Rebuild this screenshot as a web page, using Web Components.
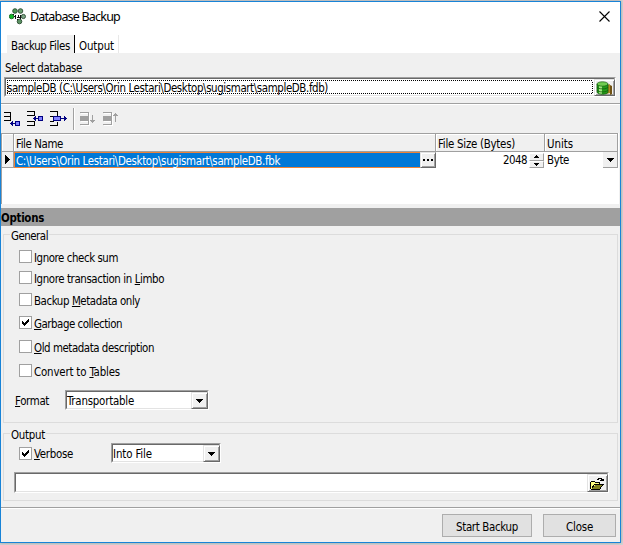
<!DOCTYPE html>
<html lang="en"><head><meta charset="utf-8"><title>Database Backup</title>
<style>
html,body{margin:0;height:545px;overflow:hidden;background:#d5d5d5}
body{font:11.4px/14px "DejaVu Sans Condensed","DejaVu Sans",sans-serif;font-stretch:condensed;color:#000}
</style></head><body>
<backup-window></backup-window>
<script>
const define=(name,html,setup)=>customElements.define(name,class extends HTMLElement{
  constructor(){super();this.attachShadow({mode:'open'}).innerHTML=html;}
  connectedCallback(){if(setup)setup(this,this.shadowRoot);}
});

// Text run fitted to a given advance width through letter spacing.
define('fit-text',`<style>:host{display:block;white-space:pre;flex:none;padding-top:1px;margin-bottom:-1px}span{display:inline-block}::slotted(u){text-underline-offset:1px;text-decoration-thickness:1px}</style><span><slot></slot></span>`,(el,r)=>{
  const s=r.querySelector('span'),w=+el.getAttribute('w');
  el.style.width=w+'px';
  s.style.letterSpacing='0px';
  const n=el.textContent.length;
  s.style.letterSpacing=((w-s.getBoundingClientRect().width)/n)+'px';
});

define('rule-line',`<style>:host{display:block;height:1px;background:#a0a0a0;border-bottom:1px solid #fff}</style>`);

define('raised-button',`<style>:host{display:flex;box-sizing:border-box;align-items:center;justify-content:center;background:#f0f0f0;border:1px solid;border-color:#e3e3e3 #696969 #696969 #e3e3e3;box-shadow:inset 1px 1px #fff,inset -1px -1px #a0a0a0;flex:none}</style><slot></slot>`);

define('drop-arrow',`<style>:host{display:block;width:7px;height:4px}svg{display:block}</style><svg width="7" height="4" shape-rendering="crispEdges"><path d="M0 0h7v1H0zM1 1h5v1H1zM2 2h3v1H2zM3 3h1v1H3z"/></svg>`);

define('sunken-field',`<style>:host{display:flex;box-sizing:border-box;border:1px solid;border-color:#a0a0a0 #fff #fff #a0a0a0;flex:none}
.in{flex:1;display:flex;min-width:0;box-sizing:border-box;border:1px solid;border-color:#696969 #e3e3e3 #e3e3e3 #696969;background:#fff}
.txt{flex:1;min-width:0;display:flex;align-items:center}
:host([focused]) .txt{margin:1px;background:repeating-linear-gradient(90deg,#000 0 1px,#fff 1px 2px) 0 0/100% 1px no-repeat,repeating-linear-gradient(90deg,#000 0 1px,#fff 1px 2px) 0 100%/100% 1px no-repeat,repeating-linear-gradient(#000 0 1px,#fff 1px 2px) 0 0/1px 100% no-repeat,repeating-linear-gradient(#000 0 1px,#fff 1px 2px) 100% 0/1px 100% no-repeat}
::slotted([slot=button]){margin:0 -1px -1px 0}</style><div class="in"><div class="txt"><slot></slot></div><slot name="button"></slot></div>`);

define('check-item',`<style>:host{display:flex;height:13px;align-items:center;gap:2px}
i{width:13px;height:13px;box-sizing:border-box;border:1px solid #a0a0a0;background:#fff;flex:none}
svg{display:none}:host([checked]) svg{display:block}</style><i><svg width="11" height="11" shape-rendering="crispEdges"><path d="M2 4h1v3H2zM3 5h1v3H3zM4 6h1v3H4zM5 5h1v3H5zM6 4h1v3H6zM7 3h1v3H7zM8 2h1v3H8z"/></svg></i><slot></slot>`);

define('group-box',`<style>:host{display:block;box-sizing:border-box;border:1px solid #dcdcdc;margin:0 2px;position:relative}
.cap{position:absolute;left:6px;top:-7px;background:#f0f0f0;padding:0 1px}</style><div class="cap"><slot name="caption"></slot></div><slot></slot>`);

define('push-button',`<style>:host{display:flex;box-sizing:border-box;height:23px;align-items:center;justify-content:center;border:1px solid #adadad;background:#e1e1e1}</style><slot></slot>`);

define('title-bar',`<style>:host{display:flex;height:31px;background:#fff;padding:0 10px 0 8px;box-sizing:border-box;align-items:flex-start}
svg{display:block;flex:none}.logo{margin-top:6px}fit-text{font:12.5px/18px "Noto Sans","Open Sans",sans-serif;margin:5px 0 0 4px}.x{margin:9px 0 0 auto}</style>
<svg class="logo" width="17" height="17"><g stroke="#27492e" stroke-width=".9"><circle cx="6" cy="3" r="2.300" fill="#4f9a58"/><circle cx="11.500" cy="3" r="2.300" fill="#6a9f70"/><circle cx="2.600" cy="8.500" r="2.300" fill="#11b925" stroke="#176a22"/><circle cx="14.400" cy="8.500" r="2.100" fill="#7fa588"/><circle cx="10.500" cy="13.500" r="2.300" fill="#5d9364"/></g><path d="M5 8.500h2M6.500 7v4M8 9.500h3M9.500 7v2M11.500 7v4M4 6.500h1M8 11.500h1" stroke="#111"/></svg>
<fit-text w="90">Database Backup</fit-text>
<svg class="x" width="11" height="11"><path d="M.5.5l10 10M10.5.5l-10 10" stroke="#000" stroke-width="1.1"/></svg>`);

define('tab-strip',`<style>:host{display:flex;height:21px;box-sizing:border-box;padding:3px 0 0 6px;background:#fff}
div{box-sizing:border-box;height:18px;padding:3px 0 0 4px}.on{width:68px;background:#f0f0f0;border-right:1px solid #000}.off{width:44px;border-right:1px solid #e8e8e8}</style>
<div class="on"><fit-text w="59">Backup Files</fit-text></div><div class="off"><fit-text w="35">Output</fit-text></div>`);

define('tool-bar',`<style>:host{display:block;height:28px;padding-left:3px;box-sizing:border-box}svg{display:block}</style>
<svg width="125" height="28" shape-rendering="crispEdges">
<g fill="none" stroke="#000"><path d="M0 7.5h7M0 11.5h6M0 15.5h7M6.5 7v9"/><path d="M23 6.5h7v4h-7M23 16.500h7v4h-7"/><path d="M46 6.500h7v4M46 11.500h4M46 20.500h7v-4M46 16.500h4"/></g>
<g fill="#8080ff" stroke="#000080"><path d="M11.5 16.5h4v4h-4z"/><path d="M34.5 11.5h4v4h-4z"/><path d="M49.500 11.500h7v4h-7z"/></g>
<g fill="#000080"><path d="M6 18h5v1H6zM8 16h1v5H8zM7 17h1v3H7z"/><path d="M29 13h5v1h-5zM31 11h1v5h-1zM30 12h1v3h-1z"/><path d="M57 13h6v1h-6zM60 11h1v5h-1zM61 12h1v3h-1z"/></g>
<path d="M69.5 3v22" stroke="#a0a0a0"/><path d="M70.500 3v22" stroke="#fff"/>
<g stroke="#fff" fill="none" transform="translate(1 1)"><path d="M76 7.500h8v12h-8M76 11.500h8M76 15.500h8"/><path d="M99 7.500h8v12h-8M99 11.500h8M99 15.500h8"/></g>
<g stroke="#a0a0a0" fill="none"><path d="M76 7.500h8v12h-8M76 11.500h8M76 15.500h8M88.500 10v8"/><path d="M99 7.500h8v12h-8M99 11.500h8M99 15.500h8M111.500 8v9"/></g>
<g fill="#a0a0a0"><path d="M76 11h8v5h-8zM86 15h5v1h-5zM87 16h3v1h-3z"/><path d="M99 11h8v5h-8zM109 10h5v1h-5zM110 9h3v1h-3z"/></g></svg>`);

define('file-grid',`<style>:host{display:block;height:71px;box-sizing:border-box;background:#fff;border-left:1px solid #a0a0a0;margin-right:1px}
.h,.r{display:grid;grid-template-columns:12px 422px 109px 1fr;width:616px}
.h{background:#f0f0f0;border-top:1px solid #a0a0a0;border-bottom:1px solid #a0a0a0;box-sizing:content-box;height:17px}
.h div{border-right:1px solid #a0a0a0;box-shadow:inset 1px 1px #fff;padding:2px 0 0 2px;box-sizing:border-box}
.r{height:16px}.ind{background:#f0f0f0;border-right:1px solid #a0a0a0;border-bottom:1px solid #a0a0a0;display:flex;align-items:center;justify-content:center}
.n{display:flex}.s{flex:1;background:#0078d7;color:#fff;border:1px solid #f08336;border-right:0;box-sizing:border-box;height:16px;padding-left:1px;line-height:14px}
raised-button.d{width:16px;height:16px}.z{display:flex;justify-content:flex-end;gap:2px;padding-top:1px;box-sizing:border-box}.z fit-text{margin-top:-1px}
.spin{width:15px;height:15px;display:flex;flex-direction:column;margin-right:1px}.spin div{flex:1;background:#f0f0f0;border:1px solid;border-color:#fff #a0a0a0 #a0a0a0 #fff;display:flex;align-items:center;justify-content:center}
.u{display:flex;justify-content:space-between;padding-left:2px}.dd{width:15px;height:16px;box-sizing:border-box;background:#f0f0f0;border-right:1px solid #a0a0a0;border-bottom:1px solid #a0a0a0;display:flex;align-items:center;justify-content:center}svg{display:block}</style>
<div class="h"><div></div><div><fit-text w="47">File Name</fit-text></div><div><fit-text w="77">File Size (Bytes)</fit-text></div><div><fit-text w="26">Units</fit-text></div></div>
<div class="r"><div class="ind"><svg width="5" height="9" shape-rendering="crispEdges"><path d="M0 0h1v9H0zM1 1h1v7H1zM2 2h1v5H2zM3 3h1v3H3zM4 4h1v1H4z"/></svg></div>
<div class="n"><div class="s"><fit-text w="264">C:\\Users\\Orin Lestari\\Desktop\\sugismart\\sampleDB.fbk</fit-text></div><raised-button class="d"><svg width="10" height="2"><path d="M0 0h2v2H0zM4 0h2v2H4zM8 0h2v2H8z"/></svg></raised-button></div>
<div class="z"><fit-text w="24">2048</fit-text><div class="spin"><div><svg width="5" height="3" shape-rendering="crispEdges"><path d="M2 0h1v1H2zM1 1h3v1H1zM0 2h5v1H0z"/></svg></div><div><svg width="5" height="3" shape-rendering="crispEdges"><path d="M0 0h5v1H0zM1 1h3v1H1zM2 2h1v1H2z"/></svg></div></div></div>
<div class="u"><fit-text w="22">Byte</fit-text><div class="dd"><drop-arrow></drop-arrow></div></div></div>`);

define('backup-window',`<style>:host{display:flex;flex-direction:column;width:621px;height:542px;box-sizing:border-box;margin-top:1px;border:1px solid #1883d7;background:#f0f0f0;box-shadow:0 0 3px #999;overflow:hidden}
title-bar{height:30px}:host>*{flex:none}
.sel{margin:7px 0 2px 4px}.db{margin:0 4px 0 3px;height:20px}
.bar{height:18px;background:#a0a0a0;margin:4px 0 8px;font-weight:bold;line-height:18px}
.gen{height:189px}.checks{padding:15px 0 0 15px;display:grid;row-gap:0}
.row{display:flex;align-items:center}.fmt{margin:13px 0 0 11px;height:20px;gap:16px}
.out{height:68px;margin-top:10px}.v{height:20px;margin:9px 0 9px 15px}.v sunken-field{margin-left:38px}
sunken-field{height:20px}.file{margin:0 8px 0 10px;height:21px}
.foot{display:flex;justify-content:flex-end;gap:11px;padding:5px 4px 0 0}</style>
<title-bar></title-bar><tab-strip></tab-strip>
<fit-text class="sel" w="77">Select database</fit-text>
<sunken-field class="db" focused><fit-text w="321">sampleDB (C:\\Users\\Orin Lestari\\Desktop\\sugismart\\sampleDB.fdb)</fit-text>
<raised-button slot="button" style="width:21px"><svg width="17" height="14"><path d="M10 5l4-2v9l-4 1z" fill="#b18b22"/><path d="M14 4l2 1v8l-2 1z" fill="#715313"/><path d="M1 3v8c0 3 11 3 11 0V3z" fill="#239b18"/><path d="M3 5v8h3V5z" fill="#a2e681"/><ellipse cx="6.500" cy="3" rx="5.500" ry="2.200" fill="#70cc50" stroke="#165d10" stroke-width=".7"/><path d="M1 6c1 2.500 10 2.500 11 0M1 9c1 2.500 10 2.500 11 0M1 3v8c0 3 11 3 11 0V3" fill="none" stroke="#165d10" stroke-width=".8"/></svg></raised-button></sunken-field>
<rule-line style="margin-top:6px"></rule-line>
<tool-bar></tool-bar><file-grid></file-grid>
<div class="bar"><fit-text w="43">Options</fit-text></div>
<group-box class="gen"><fit-text slot="caption" w="37">General</fit-text>
<div class="checks">
<check-item><fit-text w="84">Ignore check sum</fit-text></check-item>
<check-item style="margin-top:8px"><fit-text w="130">Ignore transaction in <u>L</u>imbo</fit-text></check-item>
<check-item style="margin-top:9px"><fit-text w="106">Backup <u>M</u>etadata only</fit-text></check-item>
<check-item checked style="margin-top:10px"><fit-text w="88"><u>G</u>arbage collection</fit-text></check-item>
<check-item style="margin-top:11px"><fit-text w="120"><u>O</u>ld metadata description</fit-text></check-item>
<check-item style="margin-top:11px"><fit-text w="86">Convert to <u>T</u>ables</fit-text></check-item></div>
<div class="row fmt"><fit-text w="34"><u>F</u>ormat</fit-text><sunken-field style="width:144px"><fit-text w="67">Transportable</fit-text><raised-button slot="button" style="width:17px"><drop-arrow></drop-arrow></raised-button></sunken-field></div>
</group-box>
<group-box class="out"><fit-text slot="caption" w="34">Output</fit-text>
<div class="row v"><check-item checked><fit-text w="39"><u>V</u>erbose</fit-text></check-item><sunken-field style="width:110px"><fit-text w="39">Into File</fit-text><raised-button slot="button" style="width:17px"><drop-arrow></drop-arrow></raised-button></sunken-field></div>
<sunken-field class="file"><raised-button slot="button" style="width:21px"><svg width="15" height="13" shape-rendering="crispEdges"><path d="M1 5h4v1h5v2H5l-3 4H1z" fill="#ffff80"/><path d="M2 12l3-4h8l-3 4z" fill="#808020"/><path d="M.5 12V5.500l1-1h3l1 1h4v2M.5 12.500h9l3.500-5H4.500l-3 4M7 2.500h1v-1h3v1h1v1M10 3.500h3v-2" fill="none" stroke="#000"/></svg></raised-button></sunken-field>
</group-box>
<rule-line style="margin-top:6px"></rule-line>
<div class="foot"><push-button style="width:90px"><fit-text w="62">Start Backup</fit-text></push-button><push-button style="width:73px"><fit-text w="27">Close</fit-text></push-button></div>`);

// Re-fit every run once all elements are upgraded and laid out.
const refit=root=>root.querySelectorAll('*').forEach(e=>{if(e.localName==='fit-text')e.connectedCallback();if(e.shadowRoot)refit(e.shadowRoot);});
refit(document);
</script></body></html>
